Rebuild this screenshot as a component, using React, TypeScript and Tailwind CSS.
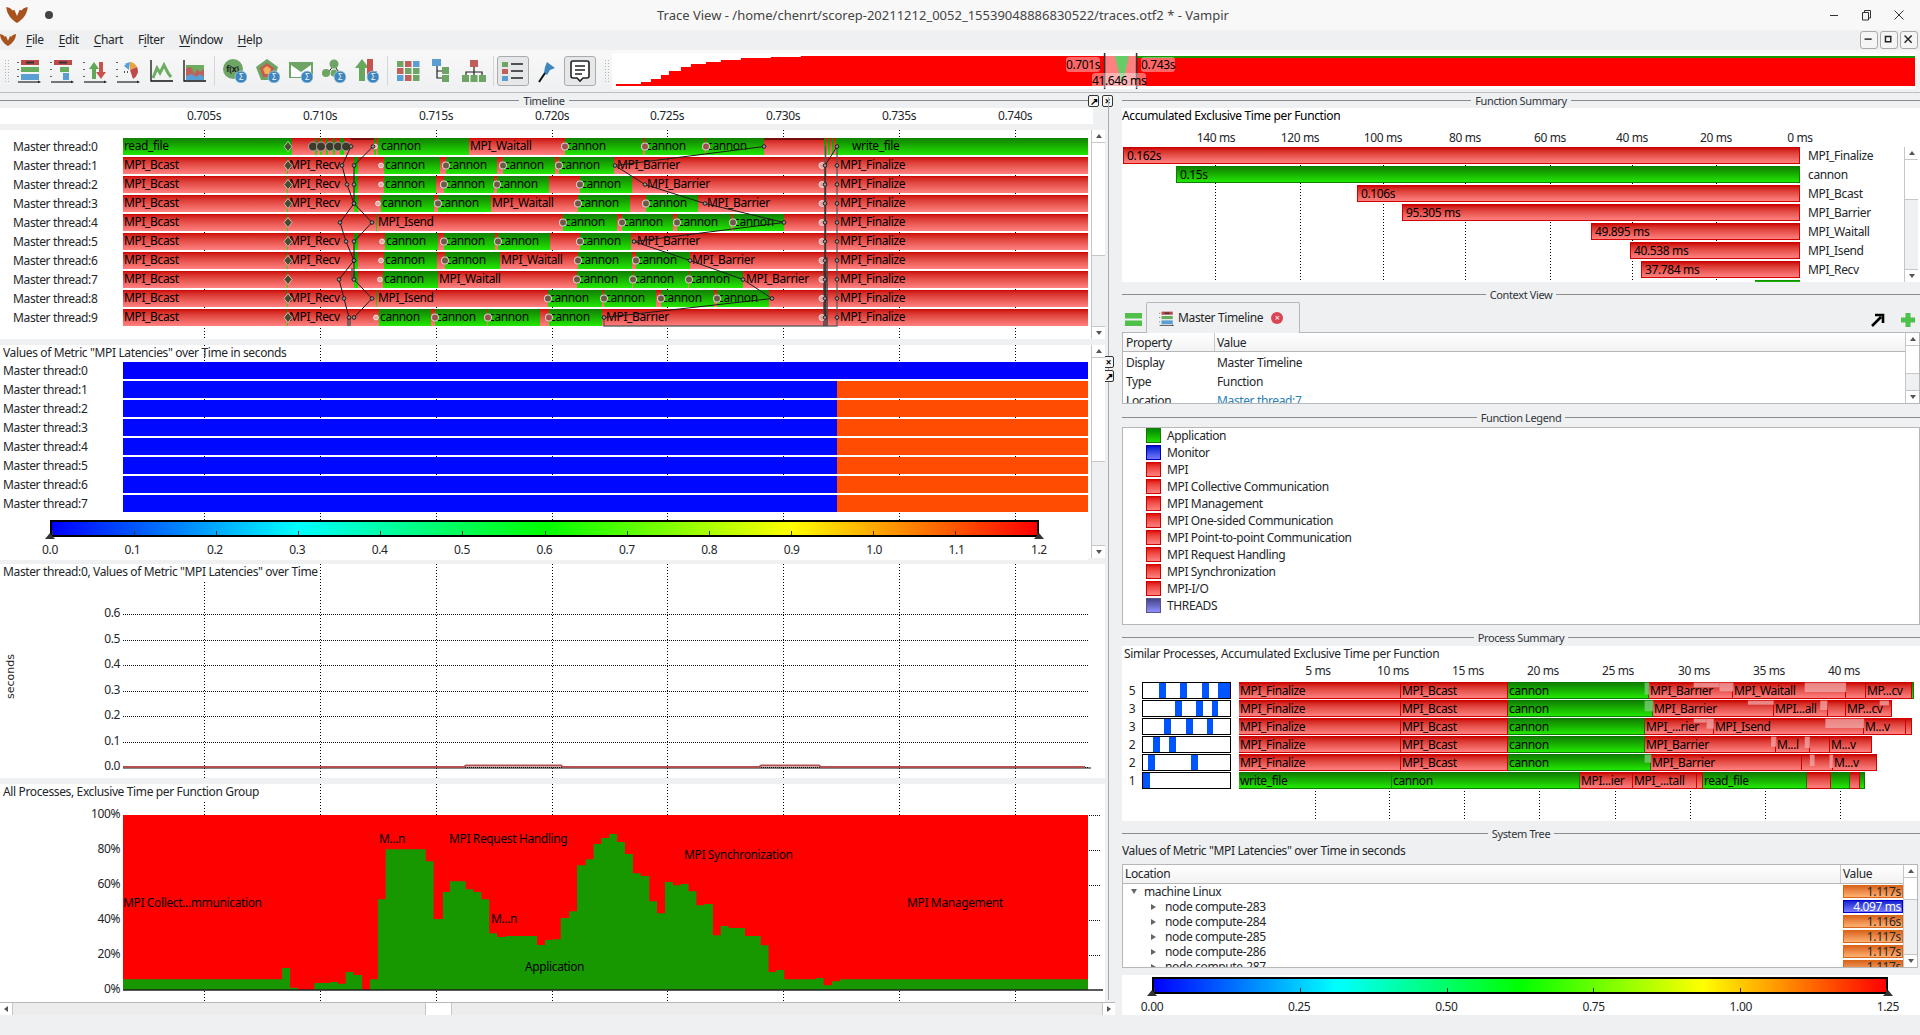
import React from "react";

type Seg = [number, "r" | "g", string?, number?];

const ticks = [204, 320, 436, 552, 667, 783, 899, 1015];
const tickLabels = ["0.705s", "0.710s", "0.715s", "0.720s", "0.725s", "0.730s", "0.735s", "0.740s"];

const finalize: Seg = [1088, "r", "MPI_Finalize", 2];
const head: Seg[] = [[287, "r", "MPI_Bcast"], [288, "g"]];
const recv: Seg[] = [...head, [354, "r", "MPI_Recv"], [358, "g"]];

const timelineRows: Seg[][] = [
	[[292, "g", "read_file"], [315, "r"], [317, "g"], [320, "r"], [322, "g"], [326, "r"], [328, "g"], [333, "r"], [335, "g"], [340, "r"], [344, "g"], [374, "r"], [376, "g"], [378, "r"], [469, "g", "cannon", 3], [565, "r", "MPI_Waitall"], [643, "g", "cannon"], [645, "r"], [705, "g", "cannon"], [706, "r"], [764, "g", "cannon"], [824, "r"], [826, "g"], [828, "r"], [830, "g"], [832, "r"], [834, "g"], [836, "r"], [1088, "g", "write_file", 16]],
	[...recv, [384, "r"], [440, "g", "cannon"], [446, "r"], [497, "g", "cannon"], [503, "r"], [555, "g", "cannon"], [559, "r"], [614, "g", "cannon"], [838, "r", "MPI_Barrier", 3], finalize],
	[...recv, [384, "r"], [436, "g", "cannon"], [444, "r"], [494, "g", "cannon"], [497, "r"], [549, "g", "cannon"], [580, "r"], [632, "g", "cannon"], [838, "r", "MPI_Barrier", 15], finalize],
	[...recv, [381, "r"], [434, "g", "cannon"], [438, "r"], [491, "g", "cannon"], [578, "r", "MPI_Waitall"], [630, "g", "cannon"], [646, "r"], [698, "g", "cannon"], [838, "r", "MPI_Barrier", 9], finalize],
	[...head, [376, "r"], [377, "g"], [563, "r", "MPI_Isend"], [617, "g", "cannon", 2], [622, "r"], [673, "g", "cannon"], [677, "r"], [731, "g", "cannon"], [733, "r"], [784, "g", "cannon"], [838, "r"], finalize],
	[...recv, [385, "r"], [438, "g", "cannon"], [444, "r"], [495, "g", "cannon"], [498, "r"], [550, "g", "cannon"], [580, "r"], [631, "g", "cannon"], [838, "r", "MPI_Barrier", 6], finalize],
	[...recv, [384, "r"], [437, "g", "cannon"], [445, "r"], [500, "g", "cannon"], [578, "r", "MPI_Waitall"], [632, "g", "cannon"], [636, "r"], [690, "g", "cannon"], [838, "r", "MPI_Barrier", 2], finalize],
	[...head, [354, "r"], [358, "g"], [383, "r"], [438, "g", "cannon"], [577, "r", "MPI_Waitall"], [632, "g", "cannon"], [633, "r"], [688, "g", "cannon"], [689, "r"], [743, "g", "cannon"], [838, "r", "MPI_Barrier", 3], finalize],
	[...head, [376, "r", "MPI_Recv"], [377, "g"], [548, "r", "MPI_Isend"], [602, "g", "cannon"], [604, "r"], [656, "g", "cannon"], [661, "r"], [714, "g", "cannon"], [717, "r"], [769, "g", "cannon"], [838, "r"], finalize],
	[...head, [354, "r", "MPI_Recv"], [379, "r"], [431, "g", "cannon"], [435, "r"], [487, "g", "cannon"], [488, "r"], [540, "g", "cannon"], [549, "r"], [602, "g", "cannon"], [838, "r", "MPI_Barrier", 4], finalize],
];

const rowY = (i: number) => 16.5 + 19 * i;
const msgPaths = [
	[351, 342, 347, 354, 340, 346, 354, 339, 344, 349],
	[373, 354, 354, 354, 372, 354, 354, 354, 372, 354],
	[764, 615, 645, 705, 784, 634, 690, 743, 772, 604],
	[837, 825, 825, 825, 825, 825, 825, 825, 825, 825],
];

const stackSteps: [number, number][] = [[395, 628], [406, 594], [417, 653], [440, 660], [462, 639], [473, 636], [484, 641], [495, 606], [507, 615], [518, 660], [529, 628], [540, 388], [596, 238], [607, 274], [620, 447], [630, 366], [652, 334], [663, 358], [674, 366], [685, 388], [696, 490], [708, 501], [752, 498], [763, 525], [774, 510], [785, 508], [797, 444], [808, 424], [820, 286], [831, 268], [842, 222], [853, 204], [864, 192], [875, 216], [886, 252], [897, 310], [909, 318], [920, 394], [931, 430], [942, 336], [953, 346], [964, 342], [975, 364], [986, 406], [998, 402], [1009, 496], [1020, 468], [1043, 474], [1065, 498], [1076, 526], [1087, 606], [1098, 600], [1142, 628], [1153, 624], [1165, 646], [1176, 634], [1523, 628]];

const stackPath = () => {
	let d = "M123 206 V195";
	stackSteps.forEach(([x, v]) => {
		d += ` V${(v / 3 - 14).toFixed(1)} H${(x / 1.4).toFixed(1)}`;
	});
	return d + " V206 Z";
};

const Ticks = ({ xs = ticks, top = 0 }: { xs?: number[]; top?: number }) => (
	<div className="absolute inset-x-0 bottom-0 pointer-events-none" style={{ top }}>
		{xs.map((x) => (
			<div key={x} className="absolute top-0 bottom-0 w-px bg-[repeating-linear-gradient(to_bottom,#000_0,#000_1px,transparent_1px,transparent_3px)]" style={{ left: x }} />
		))}
	</div>
);

const Section = ({ title, className = "" }: { title: string; className?: string }) => (
	<div className={`flex items-center text-[11px] text-[#31363b] ${className}`}>
		<div className="flex-1 h-px bg-[#8c8c8c]" />
		<span className="px-1 leading-none">{title}</span>
		<div className="flex-1 h-px bg-[#8c8c8c]" />
	</div>
);

const VScroll = ({ thumb, className = "" }: { thumb: number; className?: string }) => (
	<div className={`flex flex-col w-[14px] h-full bg-[#eff0f1] border-l border-[#c4c6c8] ${className}`}>
		<div className="h-[13px] bg-white flex items-center justify-center border-b border-[#c4c6c8]">
			<div className="w-0 h-0 border-x-[3px] border-x-transparent border-b-[4px] border-b-[#555]" />
		</div>
		<div className="bg-white border-b border-[#c4c6c8]" style={{ height: thumb }} />
		<div className="flex-1" />
		<div className="h-[13px] bg-white flex items-center justify-center border-t border-[#c4c6c8]">
			<div className="w-0 h-0 border-x-[3px] border-x-transparent border-t-[4px] border-t-[#555]" />
		</div>
	</div>
);

const ColorScale = ({ labels, width, left, format }: { labels: number[]; width: number; left: number; format: (n: number) => string }) => (
	<div className="relative h-[38px]" style={{ marginLeft: left, width }}>
		<div className="relative h-[17px] border-2 border-black bg-[linear-gradient(90deg,#0000ff,#00ffff_25%,#00ff00_50%,#ffff00_75%,#ff0000)]">
			{labels.map((n, i) => (
				<div key={n} className="absolute bottom-0 h-[4px] w-px bg-[#333]" style={{ left: `${(i / (labels.length - 1)) * 100}%` }} />
			))}
		</div>
		<div className="absolute left-[-5px] top-[13px] w-0 h-0 border-x-[5px] border-x-transparent border-b-[6px] border-b-[#333]" />
		<div className="absolute right-[-5px] top-[13px] w-0 h-0 border-x-[5px] border-x-transparent border-b-[6px] border-b-[#333]" />
		<div className="flex justify-between mx-[-20px] mt-[4px] text-xs text-[#232629]">
			{labels.map((n) => (
				<span key={n} className="w-[40px] text-center leading-[18px]">{format(n)}</span>
			))}
		</div>
	</div>
);

const Sigma = () => (
	<g>
		<circle cx="18" cy="18" r="6" fill="#3f86bd" stroke="#a9cbe4" strokeWidth="0.8" />
		<text x="18" y="21" textAnchor="middle" fontSize="8" fill="#e9f3fb" fontFamily="Noto Sans">Σ</text>
	</g>
);

const Base = () => (
	<g>
		<path d="M1 23 H22" stroke="#222" strokeWidth="1.2" />
		<path d="M21 21.5 L24 23 L21 24.5Z" fill="#222" />
		<path d="M1 3v1M1 10v1M1 17v1" stroke="#222" strokeWidth="1.4" />
	</g>
);

const Icon = ({ children, className = "" }: { children: React.ReactNode; className?: string }) => (
	<svg viewBox="0 0 24 24" className={`w-6 h-6 shrink-0 ${className}`}>{children}</svg>
);

const TimelineIcon = () => (
	<>
		<Base />
		<rect x="4" y="1" width="18" height="5" fill="#bc4a4a" />
		<rect x="9" y="2.5" width="8" height="2" fill="#333" />
		<rect x="4" y="8" width="18" height="5" fill="#66ad5c" />
		<rect x="4" y="15" width="18" height="6" fill="#5a9fd4" />
	</>
);

const toolbarA = [
	<TimelineIcon key="a" />,
	<React.Fragment key="b">
		<Base />
		<rect x="4" y="1" width="18" height="5" fill="#bc4a4a" />
		<rect x="9" y="2.5" width="8" height="2" fill="#333" />
		<rect x="10" y="8" width="9" height="5" fill="#66ad5c" />
		<rect x="13" y="14" width="6" height="7" fill="#5a9fd4" />
	</React.Fragment>,
	<React.Fragment key="c">
		<Base />
		<path d="M10 3 L15 10 H12 V20 H8 V10 H5Z" fill="#5fa855" transform="translate(1 0)" />
		<path d="M18 20 L13 13 H16 V3 H20 V13 H23Z" fill="#c8524e" />
	</React.Fragment>,
	<React.Fragment key="d">
		<Base />
		<path d="M13 11 L8 7 A9 9 0 0 1 14 3Z" fill="#5a9fd4" />
		<path d="M14 3 A9 9 0 0 1 21 8 L14 11Z" fill="#e8a33c" />
		<path d="M21 8 A9 9 0 0 1 17 20 L14 11Z" fill="#bc4a4a" />
		<path d="M8 13h1M11 13h1" stroke="#222" strokeWidth="1.5" />
	</React.Fragment>,
	<React.Fragment key="e">
		<path d="M2 1 V22 H24" stroke="#111" strokeWidth="1.3" fill="none" />
		<path d="M4 19 L8 9 L11 14 L15 6 L19 14 L22 18" stroke="#6cad62" strokeWidth="3" fill="none" />
	</React.Fragment>,
	<React.Fragment key="f">
		<path d="M2 1 V22 H24" stroke="#111" strokeWidth="1.3" fill="none" />
		<rect x="4" y="6" width="18" height="15" fill="#c0605c" />
		<path d="M4 6 H22 V10 L18 13 L15 10 L12 15 L10 9 L7 8 L4 10Z" fill="#6cad62" />
		<path d="M4 21 V17 L10 15 L14 18 L18 15 L22 18 V21Z" fill="#5a9fd4" />
	</React.Fragment>,
];

const toolbarB = [
	<React.Fragment key="g">
		<circle cx="10" cy="10" r="10" fill="#6ea565" />
		<text x="9.5" y="13" textAnchor="middle" fontSize="8.5" fontWeight="700" fill="#222" fontFamily="Noto Sans">f(x)</text>
		<Sigma />
	</React.Fragment>,
	<React.Fragment key="h">
		<path d="M11 0 L22 8 L18 21 H5 L0 8Z" fill="#6ea565" />
		<path d="M11 4 L18 9 L15 18 H7 L4 9Z" fill="#c9584e" />
		<path d="M11 7 L15 10 L13 15 H9 L7 10Z" fill="#f0b35a" />
		<Sigma />
	</React.Fragment>,
	<React.Fragment key="i">
		<rect x="0" y="3" width="24" height="16" fill="#6ea565" />
		<path d="M2 6 L12 13 L22 6 V18 H2Z" fill="#fff" />
		<Sigma />
	</React.Fragment>,
	<React.Fragment key="j">
		<path d="M5 15 L12 6 L18 15" stroke="#222" strokeWidth="1" fill="none" />
		<circle cx="12" cy="5" r="4.5" fill="#6ea565" />
		<circle cx="4" cy="14" r="4" fill="#6ea565" />
		<circle cx="12" cy="14" r="3.5" fill="#6ea565" />
		<Sigma />
	</React.Fragment>,
	<React.Fragment key="k">
		<path d="M7 0 L14 9 H10 V22 H4 V9 H0Z" fill="#68a85e" />
		<path d="M12 0 H18 V12 H22 L15 22 L12 18Z" fill="#c8524e" />
		<Sigma />
	</React.Fragment>,
];

const gridColors = ["#6ea565", "#c0605c", "#5a9fd4", "#c0605c", "#6ea565", "#6ea565", "#5a9fd4", "#c0605c", "#6ea565"];

const toolbarC = [
	<React.Fragment key="l">
		{gridColors.map((c, i) => (
			<rect key={i} x={1 + (i % 3) * 8} y={2 + Math.floor(i / 3) * 7} width="6.5" height="6" fill={c} />
		))}
	</React.Fragment>,
	<React.Fragment key="m">
		<path d="M8 6 V19 H14 M8 12 H14" stroke="#222" strokeWidth="1.2" fill="none" />
		<rect x="3" y="0" width="9" height="7" fill="#5a9fd4" />
		<rect x="13" y="8" width="7" height="7" fill="#6ea565" />
		<rect x="13" y="16" width="7" height="7" fill="#6ea565" />
	</React.Fragment>,
	<React.Fragment key="n">
		<path d="M12 8 V13 M4 16 V13 H20 V16 M12 13 V16" stroke="#222" strokeWidth="1.2" fill="none" />
		<rect x="8" y="1" width="8" height="7" fill="#c0605c" />
		<rect x="0" y="16" width="7" height="7" fill="#6ea565" />
		<rect x="8.5" y="16" width="7" height="7" fill="#6ea565" />
		<rect x="17" y="16" width="7" height="7" fill="#6ea565" />
	</React.Fragment>,
];

const fsRows: [string, number, "r" | "g", string][] = [
	["MPI_Finalize", 1123, "r", "0.162s"],
	["cannon", 1176, "g", "0.15s"],
	["MPI_Bcast", 1357, "r", "0.106s"],
	["MPI_Barrier", 1402, "r", "95.305 ms"],
	["MPI_Waitall", 1591, "r", "49.895 ms"],
	["MPI_Isend", 1630, "r", "40.538 ms"],
	["MPI_Recv", 1641, "r", "37.784 ms"],
];

const fsAxis: [string, number][] = [["140 ms", 1216], ["120 ms", 1300], ["100 ms", 1383], ["80 ms", 1465], ["60 ms", 1550], ["40 ms", 1632], ["20 ms", 1716], ["0 ms", 1800]];

const legend: [string, string][] = [
	["Application", "border-[#1a7a00] from-[#008800] to-[#22dd00]"],
	["Monitor", "border-[#0000aa] from-[#0000cc] to-[#7777ff]"],
	["MPI", "border-[#d00000] from-[#e00000] to-[#ff8080]"],
	["MPI Collective Communication", "border-[#d00000] from-[#e00000] to-[#ff8080]"],
	["MPI Management", "border-[#d00000] from-[#e00000] to-[#ff8080]"],
	["MPI One-sided Communication", "border-[#d00000] from-[#e00000] to-[#ff8080]"],
	["MPI Point-to-point Communication", "border-[#d00000] from-[#e00000] to-[#ff8080]"],
	["MPI Request Handling", "border-[#d00000] from-[#e00000] to-[#ff8080]"],
	["MPI Synchronization", "border-[#d00000] from-[#e00000] to-[#ff8080]"],
	["MPI-I/O", "border-[#d00000] from-[#e00000] to-[#ff8080]"],
	["THREADS", "border-[#55558c] from-[#44448c] to-[#9090ff]"],
];

const psAxis: [string, number][] = [["5 ms", 1318], ["10 ms", 1393], ["15 ms", 1468], ["20 ms", 1543], ["25 ms", 1618], ["30 ms", 1694], ["35 ms", 1769], ["40 ms", 1844]];
const psTicks = [1315, 1389, 1464, 1539, 1615, 1690, 1765, 1840].map((x) => x - 1122);

const psRows: { n: number; blocks: [number, number][]; segs: Seg[] }[] = [
	{ n: 5, blocks: [[95, 108], [136, 149], [178, 191], [210, 232]], segs: [[1401, "r", "MPI_Finalize"], [1508, "r", "MPI_Bcast"], [1649, "g", "cannon"], [1733, "r", "MPI_Barrier"], [1846, "r", "MPI_Waitall"], [1866, "r"], [1912, "r", "MP...cv"], [1913, "g"]] },
	{ n: 3, blocks: [[126, 139], [166, 180], [197, 210]], segs: [[1401, "r", "MPI_Finalize"], [1508, "r", "MPI_Bcast"], [1653, "g", "cannon"], [1774, "r", "MPI_Barrier"], [1828, "r", "MPI...all"], [1846, "r"], [1892, "r", "MP...cv"]] },
	{ n: 3, blocks: [[105, 118], [147, 160], [188, 200]], segs: [[1401, "r", "MPI_Finalize"], [1508, "r", "MPI_Bcast"], [1645, "g", "cannon"], [1714, "r", "MPI_...rier"], [1864, "r", "MPI_Isend"], [1906, "r", "M...v"], [1912, "r"]] },
	{ n: 2, blocks: [[84, 97], [114, 128]], segs: [[1401, "r", "MPI_Finalize"], [1508, "r", "MPI_Bcast"], [1645, "g", "cannon"], [1776, "r", "MPI_Barrier"], [1810, "r", "M...l"], [1830, "r"], [1872, "r", "M...v"]] },
	{ n: 2, blocks: [[74, 87], [157, 170]], segs: [[1401, "r", "MPI_Finalize"], [1508, "r", "MPI_Bcast"], [1651, "g", "cannon"], [1802, "r", "MPI_Barrier"], [1833, "r"], [1877, "r", "M...v"]] },
	{ n: 1, blocks: [[64, 77]], segs: [[1392, "g", "write_file"], [1580, "g", "cannon"], [1633, "r", "MPI...ier"], [1697, "r", "MPI_...tall"], [1703, "r"], [1807, "g", "read_file"], [1831, "r"], [1850, "g"], [1860, "r"], [1865, "g"]] },
];

// step patches on the summary bars, in zoomed reference units
const psPatches: [number, number, number, number, string][] = [
	[1130, 158, 50, 14, "#f2a9a9"], [1180, 158, 27, 26, "#f2a9a9"], [1345, 158, 80, 28, "#f2a9a9"],
	[1235, 212, 50, 12, "#f2a9a9"], [1375, 212, 14, 28, "#f2a9a9"], [1490, 212, 18, 14, "#f2a9a9"],
	[1130, 266, 25, 12, "#f2a9a9"], [1155, 266, 14, 30, "#f2a9a9"], [1385, 266, 75, 28, "#f2a9a9"],
	[1280, 320, 10, 30, "#f2a9a9"], [1345, 320, 10, 34, "#f2a9a9"],
	[1355, 374, 9, 34, "#f2a9a9"], [1393, 374, 7, 40, "#f2a9a9"],
	[1035, 158, 9, 36, "#7fcf7f"], [1035, 212, 17, 32, "#7fcf7f"], [1035, 374, 13, 24, "#7fcf7f"],
];

const treeRows: [string, string][] = [
	["node compute-283", "4.097 ms"],
	["node compute-284", "1.116s"],
	["node compute-285", "1.117s"],
	["node compute-286", "1.117s"],
	["node compute-287", "1.117s"],
];

const redBar = "bg-linear-to-b from-[#cc0000] to-[#ff8080]";
const greenBar = "bg-linear-to-b from-[#108000] to-[#22e800]";

const Menu = ({ first, rest, under = 0 }: { first: string; rest: string; under?: number }) => (
	<span className="leading-none">
		{under === 1 ? <>{first}</> : null}
		<span className="underline underline-offset-2">{under === 1 ? rest[0] : first}</span>
		{under === 1 ? rest.slice(1) : rest}
	</span>
);

const Logo = ({ className }: { className: string }) => (
	<svg viewBox="0 0 24 18" className={className}>
		<path d="M0 0 C3 1 5 1 7 4 L9 3 L12 10 L15 3 L17 4 C19 1 21 1 24 0 C24 7 19 14 12 18 C5 14 0 7 0 0Z" fill="#a8521d" />
	</svg>
);

const Grip = () => (
	<div className="w-[6px] h-[24px] shrink-0 bg-[radial-gradient(#b0b2b4_1px,transparent_1px)] bg-size-[3px_3px]" />
);

const Timeline = () => (
	<div className="relative flex w-[1105px] h-[209px] bg-white shrink-0">
		<Ticks />
		<div className="relative w-[1088px] pt-[8px]">
			{timelineRows.map((segs, i) => {
				let prev = 123;
				return (
					<div key={i} className="flex h-[17px] mb-[2px]">
						<div className="w-[123px] pl-[13px] bg-white text-xs leading-[17px] text-[#232629]">Master thread:{i}</div>
						{segs.map(([end, kind, label, pad], j) => {
							const width = end - prev;
							prev = end;
							return (
								<div key={j} className={`h-full text-xs leading-[16px] whitespace-nowrap text-black ${kind === "r" ? redBar : greenBar}`} style={{ width, paddingLeft: pad ?? 1 }}>
									{label}
								</div>
							);
						})}
					</div>
				);
			})}
			<svg className="absolute inset-0 w-full h-full" viewBox="0 0 1088 209">
				<path d="M604 188 V196 H837 V16" fill="none" stroke="#555" strokeWidth="1.4" opacity="0.85" />
				<rect x="823" y="127" width="5" height="69" fill="#444" opacity="0.75" />
				<path d="M825.5 16 V127" stroke="#555" strokeWidth="1.5" />
				<path d="M352 138 V150 M350 188 V196 M348 188 V196" stroke="#555" strokeWidth="1.5" fill="none" />
				<path d="M764 8 H824 V10 H764Z M351 8 H374 V10 H351Z" fill="#701010" />
				{timelineRows.map((segs, i) => {
					let prev = 123;
					return segs.map(([end, , label], j) => {
						const start = prev;
						prev = end;
						if (label !== "cannon" || start < 378) return null;
						return start < 390 ? (
							<circle key={`${i}-${j}`} cx={start - 3} cy={rowY(i)} r="2.4" fill="#f5a0a0" stroke="#e6e6e6" strokeWidth="1" />
						) : (
							<circle key={`${i}-${j}`} cx={start} cy={rowY(i)} r="3.5" fill={j % 2 ? "#6d5a45" : "#a05050"} stroke="#e6e6e6" strokeOpacity="0.8" strokeWidth="1.1" />
						);
					});
				})}
				{timelineRows.map((_, i) => (
					<g key={i}>
						<path d={`M288 ${rowY(i) - 5} L292 ${rowY(i)} L288 ${rowY(i) + 5} L284 ${rowY(i)}Z`} fill="#4a4a30" stroke="#d8d8c8" strokeWidth="0.8" />
						{i > 0 ? <circle cx="822" cy={rowY(i)} r="3" fill="#f5a0a0" stroke="#ddd" /> : null}
					</g>
				))}
				{[313, 321, 330, 338, 346].map((x) => (
					<circle key={x} cx={x} cy={rowY(0)} r="4.5" fill="#3d3a2c" stroke="#bbb" strokeWidth="0.8" />
				))}
				{msgPaths.map((p, k) => (
					<g key={k}>
						<polyline points={p.map((x, i) => `${x},${rowY(i)}`).join(" ")} fill="none" stroke="#1a1a1a" strokeWidth="1" />
						{p.map((x, i) => (
							<circle key={i} cx={x} cy={rowY(i)} r="1.8" fill="#999" stroke="#111" strokeWidth="0.9" />
						))}
					</g>
				))}
				{timelineRows.slice(1).map((_, i) => (
					<circle key={i} cx="837" cy={rowY(i + 1)} r="1.8" fill="#999" stroke="#111" strokeWidth="0.9" />
				))}
			</svg>
		</div>
		<div className="w-[3px]" />
		<VScroll thumb={113} />
	</div>
);

const HeatMap = () => (
	<div className="relative flex w-[1105px] h-[213px] bg-white shrink-0">
		<Ticks />
		<div className="relative w-[1088px]">
			<div className="h-[17px] pl-[3px] text-xs leading-[16px] text-[#232629]">Values of Metric "MPI Latencies" over Time in seconds</div>
			{Array.from({ length: 8 }, (_, i) => (
				<div key={i} className="flex h-[17px] mb-[2px]">
					<div className="w-[123px] pl-[3px] bg-white text-xs leading-[17px] text-[#232629]">Master thread:{i}</div>
					{i === 0 ? (
						<div className="flex-1 bg-[#0000ff]" />
					) : (
						<>
							<div className="w-[714px] bg-[#0008ff]" />
							<div className="flex-1 bg-[#ff4c00]" />
						</>
					)}
				</div>
			))}
			<div className="mt-[8px] bg-white pb-[2px]">
				<ColorScale left={50} width={989} labels={[0, 0.1, 0.2, 0.3, 0.4, 0.5, 0.6, 0.7, 0.8, 0.9, 1, 1.1, 1.2]} format={(n) => n.toFixed(1)} />
			</div>
		</div>
		<div className="w-[3px]" />
		<VScroll thumb={104} />
	</div>
);

const lineY: [string, number][] = [["0.6", 50], ["0.5", 76], ["0.4", 101], ["0.3", 127], ["0.2", 152], ["0.1", 178], ["0.0", 203]];

const LineChart = () => (
	<div className="relative w-[1105px] h-[214px] bg-white shrink-0">
		<Ticks />
		<div className="relative h-[17px] pl-[3px] text-xs leading-[16px] text-[#232629] w-fit bg-white">Master thread:0, Values of Metric "MPI Latencies" over Time</div>
		<svg className="absolute inset-0 w-[1105px] h-[214px]" viewBox="0 0 1105 214">
			{lineY.map(([l, y]) => (
				<path key={l} d={`M123 ${y}.5 H1088`} stroke="#111" strokeDasharray="1 1" />
			))}
			<path d="M123 204 H1091" stroke="#111" strokeWidth="1" />
			<path d="M123 203 H464 L466 201.5 H561 L563 203 H759 L761 201.5 H819 L821 203 H1085" stroke="#b05050" strokeWidth="2" fill="none" />
		</svg>
		{lineY.map(([l, y]) => (
			<span key={l} className="absolute right-[985px] text-xs leading-none text-[#232629]" style={{ top: y - 7 }}>{l}</span>
		))}
		<span className="absolute left-[-13px] top-[107px] w-[46px] text-center text-[11px] leading-none text-[#222] -rotate-90 tracking-normal font-['DejaVu_Sans']">seconds</span>
	</div>
);

const stackLabels: [string, number, number][] = [
	["MPI Collect...mmunication", 123, 904],
	["M...n", 379, 840],
	["MPI Request Handling", 449, 840],
	["MPI Synchronization", 684, 856],
	["MPI Management", 907, 904],
	["M...n", 491, 920],
	["Application", 525, 968],
];

const StackChart = () => (
	<div className="relative w-[1105px] h-[218px] bg-white shrink-0">
		<Ticks />
		<div className="relative h-[17px] pl-[3px] text-xs leading-[16px] text-[#232629] w-fit bg-white">All Processes, Exclusive Time per Function Group</div>
		<svg className="absolute inset-0 w-[1105px] h-[218px]" viewBox="0 0 1105 218">
			{[31, 66, 101, 136, 171].map((y) => (
				<path key={y} d={`M123 ${y}.5 H1100`} stroke="#111" strokeDasharray="1 1" />
			))}
			<rect x="123" y="31" width="965" height="175" fill="#ff0000" />
			<path d={stackPath()} fill="#189800" />
			<path d="M123 206 H1103" stroke="#222" strokeWidth="1.5" />
		</svg>
		{[["100%", 31], ["80%", 66], ["60%", 101], ["40%", 136], ["20%", 171], ["0%", 206]].map(([l, y]) => (
			<span key={l} className="absolute right-[985px] text-xs leading-none text-[#232629]" style={{ top: (y as number) - 7 }}>{l}</span>
		))}
		{stackLabels.map(([l, x, y]) => (
			<span key={l + x} className="absolute text-xs leading-none text-black whitespace-nowrap" style={{ left: x, top: y - 784 - 7 }}>{l}</span>
		))}
	</div>
);

const FunctionSummary = () => (
	<div className="relative h-[174px] bg-white overflow-hidden shrink-0 flex">
		<div className="relative w-[782px]">
			<Ticks top={39} xs={[1215, 1300, 1383, 1465, 1550, 1632, 1716].map((x) => x - 1122)} />
			<div className="h-[16px] text-xs leading-[16px] text-black">Accumulated Exclusive Time per Function</div>
			<div className="relative h-[23px] bg-white">
				{fsAxis.map(([l, x]) => (
					<span key={l} className="absolute -translate-x-1/2 text-xs leading-[28px] text-[#232629] whitespace-nowrap" style={{ left: x - 1122 }}>{l}</span>
				))}
			</div>
			{fsRows.map(([name, x, kind, val]) => (
				<div key={name} className="relative flex h-[17px] mb-[2px]">
					<div className="w-[678px] flex justify-end">
						<div className={`h-full border ${kind === "r" ? `border-[#d00000] ${redBar}` : `border-[#0a8000] ${greenBar}`} pl-[3px] text-xs leading-[16px] text-black`} style={{ width: 1800 - x }}>{val}</div>
					</div>
					<div className="pl-[8px] text-xs leading-[18px] text-[#232629]">{name}</div>
				</div>
			))}
			<div className={`ml-[633px] w-[45px] h-[3px] ${greenBar}`} />
		</div>
		<div className="pt-[39px] h-full flex ml-auto mr-[2px]">
			<VScroll thumb={40} />
		</div>
	</div>
);

const ContextView = () => (
	<div className="shrink-0">
		<div className="flex h-[30px] items-end relative z-10">
			<svg viewBox="0 0 17 13" className="w-[17px] h-[13px] ml-[3px] mb-[6px]">
				<rect width="17" height="5.5" fill="#4fc04a" />
				<rect y="7.5" width="17" height="5.5" fill="#4fc04a" />
			</svg>
			<div className="flex items-center h-[31px] w-[154px] ml-[4px] -mb-px bg-[#eff0f1] border border-b-0 border-[#b5b7b9] rounded-t-[2px]">
				<Icon className="w-[15px] h-[15px] ml-[12px]"><TimelineIcon /></Icon>
				<span className="ml-[4px] text-xs text-[#232629] whitespace-nowrap">Master Timeline</span>
				<span className="ml-[8px] w-[12px] h-[12px] rounded-full bg-[#da4453] text-white text-[9px] leading-[12px] text-center">×</span>
			</div>
			<div className="flex-1" />
			<svg viewBox="0 0 16 16" className="w-[16px] h-[16px] mb-[4px] mr-[14px]">
				<path d="M2 14 L11 5 M5 3 H13 V11" stroke="#000" strokeWidth="2.6" fill="none" />
			</svg>
			<svg viewBox="0 0 16 16" className="w-[16px] h-[16px] mb-[4px] mr-[4px]">
				<path d="M8 1 V15 M1 8 H15" stroke="#4fc04a" strokeWidth="5" />
			</svg>
		</div>
		<div className="flex h-[72px] bg-white border border-[#b5b7b9] overflow-hidden text-xs text-[#232629]">
			<div className="flex-1">
				<div className="flex h-[19px] border-b border-[#b5b7b9] bg-linear-to-b from-white to-[#f2f2f2] leading-[20px]">
					<div className="w-[92px] pl-[3px] border-r border-[#c8c8c8]">Property</div>
					<div className="pl-[2px]">Value</div>
				</div>
				{[["Display", "Master Timeline"], ["Type", "Function"], ["Location", "Master thread:7"]].map(([k, v], i) => (
					<div key={k} className="flex h-[19px] leading-[21px]">
						<div className="w-[92px] pl-[3px]">{k}</div>
						<div className={`pl-[2px] ${i === 2 ? "text-[#2980b9]" : ""}`}>{v}</div>
					</div>
				))}
			</div>
			<VScroll thumb={28} />
		</div>
	</div>
);

const Legend = () => (
	<div className="h-[198px] bg-white border border-[#b5b7b9] pl-[23px] shrink-0">
		{legend.map(([l, c]) => (
			<div key={l} className="flex items-center h-[17px] text-xs text-[#232629] relative top-[-1px]">
				<div className={`w-[15px] h-[15px] border bg-linear-to-b ${c}`} />
				<span className="ml-[6px]">{l}</span>
			</div>
		))}
	</div>
);

const ProcessSummary = () => (
	<div className="relative h-[175px] bg-white shrink-0 overflow-hidden">
		<Ticks top={34} xs={psTicks} />
		<div className="relative h-[16px] pl-[2px] text-xs leading-[16px] text-[#232629]">Similar Processes, Accumulated Exclusive Time per Function</div>
		<div className="relative h-[20px] bg-white">
			{psAxis.map(([l, x]) => (
				<span key={l} className="absolute -translate-x-1/2 text-xs leading-[18px] text-[#232629] whitespace-nowrap" style={{ left: x - 1122 }}>{l}</span>
			))}
		</div>
		{psRows.map((row, i) => {
			let prev = 1239;
			return (
				<div key={i} className="relative flex h-[17px] mb-px">
					<div className="w-[20px] text-xs leading-[17px] text-center text-[#232629]">{row.n}</div>
					<div className="relative w-[89px] h-full border border-black bg-white">
						{row.blocks.map(([a, b]) => (
							<div key={a} className="absolute top-0 bottom-0 bg-[#0055ff]" style={{ left: (a - 64) / 1.936, width: (b - a) / 1.936 }} />
						))}
					</div>
					<div className="w-[8px]" />
					{row.segs.map(([end, kind, label], j) => {
						const width = end - prev;
						prev = end;
						return (
							<div key={j} className={`h-full border-y border-r whitespace-nowrap overflow-hidden pl-[1px] text-xs leading-[15px] text-black ${kind === "r" ? `border-[#d00000] ${redBar}` : `border-[#0a7a00] ${greenBar}`}`} style={{ width }}>
								{label}
							</div>
						);
					})}
				</div>
			);
		})}
		<svg className="absolute inset-0 w-full h-full pointer-events-none" viewBox="0 0 798 175">
			{psPatches.map(([x, y, w, h, c]) => (
				<rect key={`${x}-${y}`} x={x / 1.936 - 12} y={y / 3 - 16} width={w / 1.936} height={h / 3} fill={c} fillOpacity="0.75" />
			))}
		</svg>
	</div>
);

const SystemTree = () => (
	<div className="flex h-[104px] mr-[2px] bg-white border border-[#b5b7b9] overflow-hidden text-xs text-[#232629] shrink-0">
		<div className="flex-1 overflow-hidden">
			<div className="flex h-[19px] border-b border-[#b5b7b9] bg-linear-to-b from-white to-[#f2f2f2] leading-[18px]">
				<div className="w-[718px] pl-[2px] border-r border-[#c8c8c8]">Location</div>
				<div className="pl-[2px]">Value</div>
			</div>
			<div className="flex h-[15px] leading-[15px]">
				<div className="w-[720px] flex items-center pl-[8px]">
					<div className="w-0 h-0 border-x-[3px] border-x-transparent border-t-[5px] border-t-[#666]" />
					<span className="ml-[7px]">machine Linux</span>
				</div>
				<div className="w-[60px] h-[13px] mt-[1px] border border-[#d9661a] bg-linear-to-b from-[#d9661a] to-[#ffb070] text-right pr-[1px] leading-[12px]">1.117s</div>
			</div>
			{treeRows.map(([n, v], i) => (
				<div key={n} className="flex h-[15px] leading-[15px]">
					<div className="w-[720px] flex items-center pl-[28px]">
						<div className="w-0 h-0 border-y-[3px] border-y-transparent border-l-[5px] border-l-[#666]" />
						<span className="ml-[9px]">{n}</span>
					</div>
					<div className={`w-[60px] h-[13px] mt-[1px] border text-right pr-[1px] leading-[12px] bg-linear-to-b ${i === 0 ? "border-[#0000cc] from-[#1a1ad0] to-[#7a7aff] text-white" : "border-[#d9661a] from-[#d9661a] to-[#ffb070]"}`}>{v}</div>
				</div>
			))}
		</div>
		<VScroll thumb={22} />
	</div>
);

const SideButton = ({ glyph, className = "" }: { glyph: string; className?: string }) => (
	<div className={`w-[11px] h-[12px] border border-[#333] rounded-[2px] bg-[#f5f5f5] text-[10px] leading-[10px] text-center font-bold text-black ${className}`}>{glyph}</div>
);

const App = () => {
	return (
		<div className="w-[1920px] h-[1035px] overflow-hidden bg-[#eff0f1] font-['Noto_Sans',sans-serif] tracking-[-0.023em] text-[#232629]">
			<div className="flex items-center h-[30px] bg-[#f8f8f8]">
				<div className="flex items-center w-[60px] shrink-0">
					<Logo className="w-[22px] h-[16px] ml-[6px]" />
					<div className="ml-[17px] w-[8px] h-[8px] rounded-full bg-[#444]" />
				</div>
				<div className="flex-1 mt-px text-center text-[13px] tracking-normal text-[#444]">Trace View - /home/chenrt/scorep-20211212_0052_15539048886830522/traces.otf2 * - Vampir</div>
				<div className="flex items-center w-[94px] shrink-0 text-[#333]">
					<svg viewBox="0 0 12 12" className="w-[12px] h-[12px] ml-[2px]"><path d="M2 6.5 H10" stroke="#333" /></svg>
					<svg viewBox="0 0 12 12" className="w-[12px] h-[12px] ml-[20px]"><path d="M2.5 3.5 H8.5 V11 H2.5Z M4.5 3.5 V1.5 H10.5 V9 H8.5" stroke="#333" fill="none" /></svg>
					<svg viewBox="0 0 12 12" className="w-[12px] h-[12px] ml-[21px]"><path d="M1.5 1.5 L10.5 10.5 M10.5 1.5 L1.5 10.5" stroke="#333" /></svg>
				</div>
			</div>
			<div className="flex items-center h-[20px] text-xs">
				<Logo className="w-[16px] h-[12px]" />
				<div className="flex ml-[10px] gap-[15px] text-[#232629]">
					<Menu first="F" rest="ile" />
					<Menu first="E" rest="dit" />
					<Menu first="C" rest="hart" />
					<Menu first="F" rest="ilter" under={1} />
					<Menu first="W" rest="indow" />
					<Menu first="H" rest="elp" />
				</div>
				<div className="flex-1" />
				<div className="flex gap-[2px] pr-[2px]">
					{["M5 9 H13", "M6 6 H12 V12 H6Z", "M5 5 L13 13 M13 5 L5 13"].map((d) => (
						<div key={d} className="w-[18px] h-[18px] border border-[#a9abad] rounded-[3px] bg-[#f5f5f5]">
							<svg viewBox="0 0 18 18" className="w-full h-full"><path d={d} stroke="#222" strokeWidth="1.6" fill="none" transform="translate(-1 -1)" /></svg>
						</div>
					))}
				</div>
			</div>
			<div className="flex items-center h-[43px] bg-linear-to-b from-[#f8f8f9] to-[#eff0f1] border-b border-[#bcbec0]">
				<div className="w-[4px] shrink-0" />
				<Grip />
				<div className="w-[7px] shrink-0" />
				<div className="flex gap-[9px]">
					{toolbarA.map((c, i) => <Icon key={i}>{c}</Icon>)}
				</div>
				<div className="w-px h-[30px] bg-[#d5d6d8] mx-[8px]" />
				<div className="flex gap-[9px]">
					{toolbarB.map((c, i) => <Icon key={i}>{c}</Icon>)}
				</div>
				<div className="w-px h-[30px] bg-[#d5d6d8] mx-[8px]" />
				<div className="flex gap-[9px]">
					{toolbarC.map((c, i) => <Icon key={i}>{c}</Icon>)}
				</div>
				<div className="w-px h-[30px] bg-[#d5d6d8] ml-[7px] mr-[3px]" />
				<div className="flex items-center justify-center w-[32px] h-[30px] border border-[#a9abad] rounded-[3px] bg-[#e6e7e8]">
					<Icon>
						<rect x="1" y="3" width="6" height="5" fill="#6ea565" />
						<rect x="1" y="10" width="6" height="5" fill="#c0605c" />
						<rect x="1" y="17" width="6" height="5" fill="#5a9fd4" />
						<path d="M10 5 H22 M10 12 H22 M10 19 H22" stroke="#222" strokeWidth="1.5" />
					</Icon>
				</div>
				<Icon className="ml-[5px]">
					<path d="M13 3 L21 9 L16 11 L13 16 L10 14 L11 8Z" fill="#3f86bd" />
					<path d="M11 14 L5 23" stroke="#111" strokeWidth="2" />
				</Icon>
				<div className="flex items-center justify-center w-[32px] h-[30px] ml-[6px] border border-[#a9abad] rounded-[3px] bg-[#e6e7e8]">
					<Icon>
						<path d="M5 2 H19 Q21 2 21 4 V17 Q21 19 19 19 H15 L12 22 L9 19 H5 Q3 19 3 17 V4 Q3 2 5 2Z" fill="#fff" stroke="#222" strokeWidth="1.6" />
						<path d="M7 7 H17 M7 11 H17 M7 15 H14" stroke="#222" strokeWidth="1.5" />
					</Icon>
				</div>
				<div className="w-[8px] shrink-0" />
				<Grip />
				<div className="w-[2px] shrink-0" />
				<div className="relative flex-1 h-[36px] mr-[5px] bg-white">
					<svg className="absolute inset-0 w-full h-full" viewBox="611 54 1304 36" preserveAspectRatio="none">
						<path d="M615 87 V85 H640 V83 H650 V80 H660 V76 H668 V72 H680 V68 H690 V65 H705 V63 H720 V61 H740 V59 H770 V58 H800 V57 H1915 V87Z" fill="#ff0000" />
						<rect x="1136" y="57" width="779" height="2" fill="#1a9a00" />
						<rect x="1104" y="57" width="32" height="30" fill="#ff8080" />
						<path d="M1114 57 H1128 L1125 72 L1121 84 L1118 72Z" fill="#66cc66" />
						<path d="M1104 54 V90 M1136 54 V90" stroke="#333" strokeWidth="1.6" />
					</svg>
					<span className="absolute left-[454px] top-[4px] text-xs leading-[15px] text-black bg-white/40 rounded-[3px]">0.701s</span>
					<span className="absolute left-[529px] top-[4px] text-xs leading-[15px] text-black bg-white/40 rounded-[3px]">0.743s</span>
					<span className="absolute left-[480px] top-[20px] text-xs leading-[15px] text-black bg-white/40 rounded-[3px]">41.646 ms</span>
				</div>
			</div>
			<div className="flex h-[942px]">
				<div className="relative flex flex-col w-[1120px] shrink-0">
					<div className="absolute left-[1108px] top-[4px] bottom-[35px] w-px bg-[#a9abad]" />
					<SideButton glyph="×" className="absolute left-[1103px] top-[263px]" />
					<SideButton glyph="↗" className="absolute left-[1103px] top-[277px]" />
					<div className="flex items-center h-[15px] w-[1115px]">
						<Section title="Timeline" className="w-[1088px]" />
						<SideButton glyph="↗" />
						<SideButton glyph="×" className="ml-[3px]" />
					</div>
					<div className="relative h-[16px] w-[1093px] bg-white shrink-0">
						{ticks.map((x, i) => (
							<span key={x} className="absolute -translate-x-1/2 text-xs leading-[16px] text-[#232629]" style={{ left: x }}>{tickLabels[i]}</span>
						))}
					</div>
					<div className="h-[6px] shrink-0" />
					<Timeline />
					<div className="h-[6px] shrink-0" />
					<HeatMap />
					<div className="h-[6px] shrink-0" />
					<LineChart />
					<div className="h-[6px] shrink-0" />
					<StackChart />
					<div className="flex items-center h-[13px] w-[1115px] bg-[#ececec] border-t border-[#b5b7b9] shrink-0">
						<div className="w-[13px] h-full bg-white flex items-center justify-center border-r border-[#c4c6c8]">
							<div className="w-0 h-0 border-y-[3px] border-y-transparent border-r-[4px] border-r-[#555]" />
						</div>
						<div className="ml-[412px] w-[27px] h-full bg-white border-x border-[#c4c6c8]" />
						<div className="flex-1" />
						<div className="w-[13px] h-full bg-white flex items-center justify-center border-l border-[#c4c6c8]">
							<div className="w-0 h-0 border-y-[3px] border-y-transparent border-l-[4px] border-l-[#555]" />
						</div>
					</div>
				</div>
				<div className="flex flex-col flex-1 pl-[2px]">
					<Section title="Function Summary" className="h-[15px] shrink-0" />
					<FunctionSummary />
					<Section title="Context View" className="h-[20px] pt-[4px] shrink-0" />
					<ContextView />
					<Section title="Function Legend" className="h-[23px] pt-[4px] shrink-0" />
					<Legend />
					<Section title="Process Summary" className="h-[21px] pt-[3px] shrink-0" />
					<ProcessSummary />
					<Section title="System Tree" className="h-[21px] pt-[4px] shrink-0" />
					<div className="h-[22px] text-xs leading-[18px] text-[#232629] shrink-0">Values of Metric "MPI Latencies" over Time in seconds</div>
					<SystemTree />
					<div className="h-[7px] shrink-0" />
					<div className="h-[40px] bg-white shrink-0 pt-[2px]">
						<ColorScale left={30} width={736} labels={[0, 0.25, 0.5, 0.75, 1, 1.25]} format={(n) => n.toFixed(2)} />
					</div>
				</div>
			</div>
		</div>
	);
};

export default App;
